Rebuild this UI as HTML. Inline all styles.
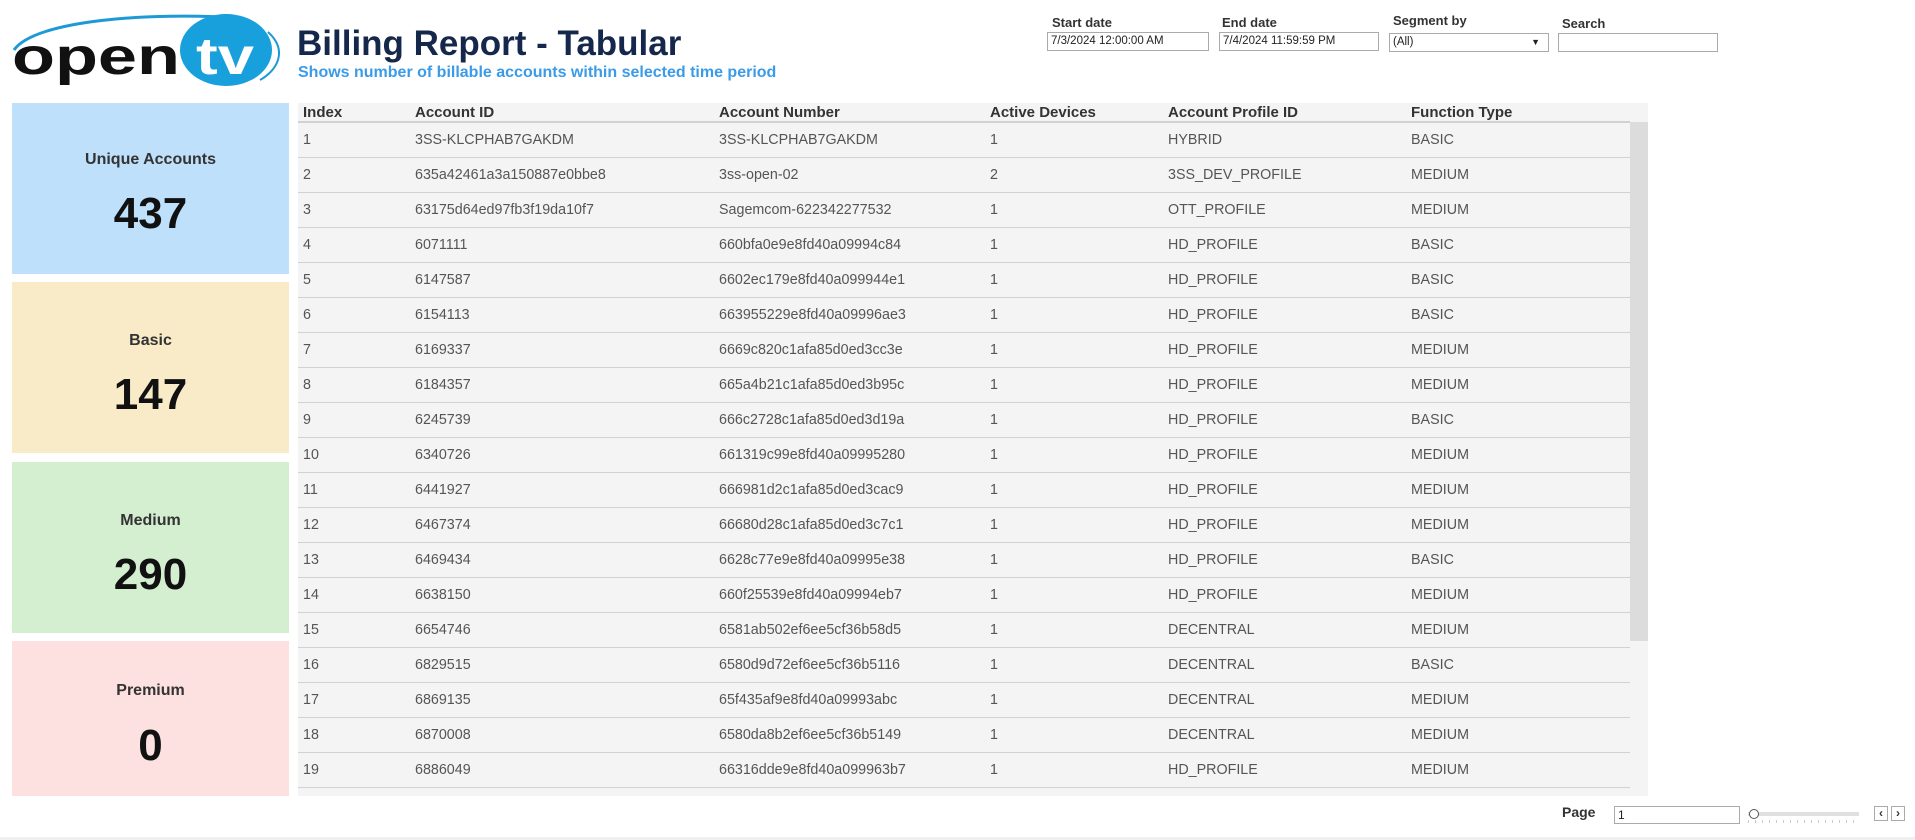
<!DOCTYPE html>
<html><head><meta charset="utf-8"><style>
*{margin:0;padding:0;box-sizing:border-box}
body{width:1915px;height:840px;background:#fff;font-family:"Liberation Sans",Arial,sans-serif;position:relative;overflow:hidden;color:#333}
.abs{position:absolute}
.card{position:absolute;left:12px;width:277px;text-align:center}
.card .l{position:absolute;width:100%;font-weight:bold;font-size:16px;color:#333}
.card .n{position:absolute;width:100%;font-weight:bold;font-size:44px;color:#111}
.lbl{position:absolute;font-size:13px;font-weight:bold;color:#333}
.inp{position:absolute;height:19px;border:1px solid #aaa;font-size:11.5px;line-height:17px;padding-left:3px;color:#222;background:#fff}
table{border-collapse:collapse;table-layout:fixed}
td,th{height:35px;text-align:left;font-size:14.3px;padding-left:5px;white-space:nowrap;overflow:hidden}
th{height:19px;font-size:15px;font-weight:bold;color:#333;border-bottom:2px solid #d2d2d2}
td{color:#555;border-bottom:1px solid #d2d2d2}
</style></head><body>
<svg class="abs" style="left:10px;top:8px" width="280" height="80" viewBox="0 0 280 80">
<path d="M4 42 C25 12 140 4 232 10" stroke="#1d9ad6" stroke-width="3" fill="none"/>
<path d="M258 24 C278 42 268 62 250 72" stroke="#1d9ad6" stroke-width="2" fill="none"/>
<ellipse cx="216" cy="42" rx="46" ry="36" fill="#18a0dc"/>
<text x="2" y="66" textLength="168" lengthAdjust="spacingAndGlyphs" font-family="Liberation Sans" font-weight="bold" font-size="52" fill="#111">open</text>
<text x="186" y="66" textLength="58" lengthAdjust="spacingAndGlyphs" font-family="Liberation Sans" font-weight="bold" font-size="52" fill="#fff">tv</text>
</svg>
<div class="abs" style="left:297px;top:24px;font-size:35px;font-weight:bold;color:#15284b">Billing Report - Tabular</div>
<div class="abs" style="left:298px;top:64px;font-size:16px;font-weight:bold;color:#3a9be8">Shows number of billable accounts within selected time period</div>

<div class="lbl" style="left:1052px;top:15px">Start date</div>
<div class="inp" style="left:1047px;top:32px;width:162px">7/3/2024 12:00:00 AM</div>
<div class="lbl" style="left:1222px;top:15px">End date</div>
<div class="inp" style="left:1219px;top:32px;width:160px">7/4/2024 11:59:59 PM</div>
<div class="lbl" style="left:1393px;top:13px">Segment by</div>
<div class="inp" style="left:1389px;top:33px;width:160px">(All)<span style="position:absolute;right:8px;font-size:9px">▼</span></div>
<div class="lbl" style="left:1562px;top:16px">Search</div>
<div class="inp" style="left:1558px;top:33px;width:160px"></div>

<div class="card" style="top:103px;height:171px;background:#bfe0fb"><div class="l" style="top:48px">Unique Accounts</div><div class="n" style="top:86px">437</div></div>
<div class="card" style="top:282px;height:171px;background:#f9ebc8"><div class="l" style="top:50px">Basic</div><div class="n" style="top:88px">147</div></div>
<div class="card" style="top:462px;height:171px;background:#d4eed0"><div class="l" style="top:50px">Medium</div><div class="n" style="top:88px">290</div></div>
<div class="card" style="top:641px;height:155px;background:#fde0e0"><div class="l" style="top:41px">Premium</div><div class="n" style="top:80px">0</div></div>

<div class="abs" style="left:298px;top:103px;width:1350px;height:693px;background:#f4f4f4;overflow:hidden">
<div class="abs" style="left:1332px;top:19px;width:18px;height:519px;background:#dcdcdc"></div>
<table style="width:1332px">
<colgroup><col style="width:112px"><col style="width:304px"><col style="width:271px"><col style="width:178px"><col style="width:243px"><col style="width:224px"></colgroup>
<tr><th>Index</th><th>Account ID</th><th>Account Number</th><th>Active Devices</th><th>Account Profile ID</th><th>Function Type</th></tr>
<tr><td>1</td><td>3SS-KLCPHAB7GAKDM</td><td>3SS-KLCPHAB7GAKDM</td><td>1</td><td>HYBRID</td><td>BASIC</td></tr>
<tr><td>2</td><td>635a42461a3a150887e0bbe8</td><td>3ss-open-02</td><td>2</td><td>3SS_DEV_PROFILE</td><td>MEDIUM</td></tr>
<tr><td>3</td><td>63175d64ed97fb3f19da10f7</td><td>Sagemcom-622342277532</td><td>1</td><td>OTT_PROFILE</td><td>MEDIUM</td></tr>
<tr><td>4</td><td>6071111</td><td>660bfa0e9e8fd40a09994c84</td><td>1</td><td>HD_PROFILE</td><td>BASIC</td></tr>
<tr><td>5</td><td>6147587</td><td>6602ec179e8fd40a099944e1</td><td>1</td><td>HD_PROFILE</td><td>BASIC</td></tr>
<tr><td>6</td><td>6154113</td><td>663955229e8fd40a09996ae3</td><td>1</td><td>HD_PROFILE</td><td>BASIC</td></tr>
<tr><td>7</td><td>6169337</td><td>6669c820c1afa85d0ed3cc3e</td><td>1</td><td>HD_PROFILE</td><td>MEDIUM</td></tr>
<tr><td>8</td><td>6184357</td><td>665a4b21c1afa85d0ed3b95c</td><td>1</td><td>HD_PROFILE</td><td>MEDIUM</td></tr>
<tr><td>9</td><td>6245739</td><td>666c2728c1afa85d0ed3d19a</td><td>1</td><td>HD_PROFILE</td><td>BASIC</td></tr>
<tr><td>10</td><td>6340726</td><td>661319c99e8fd40a09995280</td><td>1</td><td>HD_PROFILE</td><td>MEDIUM</td></tr>
<tr><td>11</td><td>6441927</td><td>666981d2c1afa85d0ed3cac9</td><td>1</td><td>HD_PROFILE</td><td>MEDIUM</td></tr>
<tr><td>12</td><td>6467374</td><td>66680d28c1afa85d0ed3c7c1</td><td>1</td><td>HD_PROFILE</td><td>MEDIUM</td></tr>
<tr><td>13</td><td>6469434</td><td>6628c77e9e8fd40a09995e38</td><td>1</td><td>HD_PROFILE</td><td>BASIC</td></tr>
<tr><td>14</td><td>6638150</td><td>660f25539e8fd40a09994eb7</td><td>1</td><td>HD_PROFILE</td><td>MEDIUM</td></tr>
<tr><td>15</td><td>6654746</td><td>6581ab502ef6ee5cf36b58d5</td><td>1</td><td>DECENTRAL</td><td>MEDIUM</td></tr>
<tr><td>16</td><td>6829515</td><td>6580d9d72ef6ee5cf36b5116</td><td>1</td><td>DECENTRAL</td><td>BASIC</td></tr>
<tr><td>17</td><td>6869135</td><td>65f435af9e8fd40a09993abc</td><td>1</td><td>DECENTRAL</td><td>MEDIUM</td></tr>
<tr><td>18</td><td>6870008</td><td>6580da8b2ef6ee5cf36b5149</td><td>1</td><td>DECENTRAL</td><td>MEDIUM</td></tr>
<tr><td>19</td><td>6886049</td><td>66316dde9e8fd40a099963b7</td><td>1</td><td>HD_PROFILE</td><td>MEDIUM</td></tr>
<tr><td>20</td><td></td><td></td><td></td><td></td><td></td></tr>
</table>
</div>

<div class="abs" style="left:1562px;top:804px;font-size:14px;font-weight:bold;color:#333">Page</div>
<div class="inp" style="left:1614px;top:806px;width:126px;height:18px;font-size:12px">1</div>
<div class="abs" style="left:1748px;top:812px;width:111px;height:4px;background:#e0e0e0"></div>
<div class="abs" style="left:1749px;top:809px;width:10px;height:10px;border:1px solid #555;border-radius:50%;background:#fff"></div>
<div class="abs" style="left:1748px;top:820px;width:111px;height:3px;background:repeating-linear-gradient(90deg,#ccc 0 1px,transparent 1px 7px)"></div>
<div class="abs" style="left:1874px;top:806px;width:14px;height:15px;border:1px solid #aaa;font-size:12px;line-height:13px;text-align:center;font-weight:bold">&lsaquo;</div>
<div class="abs" style="left:1891px;top:806px;width:14px;height:15px;border:1px solid #aaa;font-size:12px;line-height:13px;text-align:center;font-weight:bold">&rsaquo;</div>
<div class="abs" style="left:0;top:837px;width:1915px;height:3px;background:#f0f0f0"></div>
</body></html>
